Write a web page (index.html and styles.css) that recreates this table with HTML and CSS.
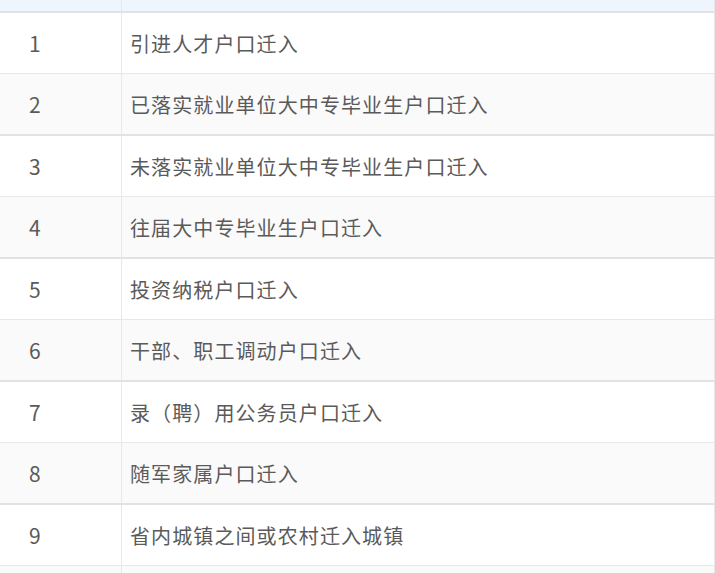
FILE: index.html
```html
<!DOCTYPE html>
<html lang="zh-CN">
<head>
<meta charset="utf-8">
<link rel="stylesheet" href="styles.css">
</head>
<body>
<div class="table">
  <div class="row head"><div class="c1"></div><div class="c2"></div></div>
  <div class="row odd"><div class="c1">1</div><div class="c2">引进人才户口迁入</div></div>
  <div class="row even"><div class="c1">2</div><div class="c2">已落实就业单位大中专毕业生户口迁入</div></div>
  <div class="row odd"><div class="c1">3</div><div class="c2">未落实就业单位大中专毕业生户口迁入</div></div>
  <div class="row even"><div class="c1">4</div><div class="c2">往届大中专毕业生户口迁入</div></div>
  <div class="row odd"><div class="c1">5</div><div class="c2">投资纳税户口迁入</div></div>
  <div class="row even"><div class="c1">6</div><div class="c2">干部、职工调动户口迁入</div></div>
  <div class="row odd"><div class="c1">7</div><div class="c2">录（聘）用公务员户口迁入</div></div>
  <div class="row even"><div class="c1">8</div><div class="c2">随军家属户口迁入</div></div>
  <div class="row odd"><div class="c1">9</div><div class="c2">省内城镇之间或农村迁入城镇</div></div>
  <div class="row even"><div class="c1"></div><div class="c2"></div></div>
</div>
</body>
</html>
```
FILE: styles.css
```css
html, body {
  margin: 0;
  padding: 0;
  background: #ffffff;
  overflow: hidden;
}
.table {
  width: 714px;
  border-right: 1px solid #e6e6e6;
  font-family: "Noto Sans CJK SC", "Microsoft YaHei", sans-serif;
  font-size: 20px;
  color: #5a5a5a;
}
.row {
  display: grid;
  grid-template-columns: 122px 1fr;
  height: 60px;
  align-items: stretch;
}
.row .c1 {
  border-right: 1px solid #e8e8e8;
  padding-left: 29px;
  display: flex;
  align-items: center;
  font-size: 21px;
}
.row .c2 {
  padding-left: 8px;
  display: flex;
  align-items: center;
  letter-spacing: 1.1px;
}
.row.head {
  height: 11px;
  background: #eef5fd;
  border-bottom: 2px solid #dfe3e8;
}
.row.head .c1 {
  border-right-color: #e3e9f0;
}
.row.odd {
  background: #ffffff;
  border-bottom: 1px solid #e8e8e8;
}
.row.even {
  background: #fafafa;
  border-bottom: 2px solid #e2e2e2;
}
```
